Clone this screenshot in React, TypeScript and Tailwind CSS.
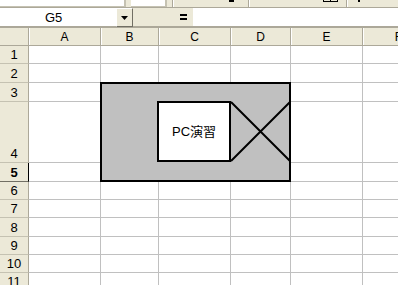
const cols = [
  { name: 'A', w: 72 },
  { name: 'B', w: 58 },
  { name: 'C', w: 72 },
  { name: 'D', w: 60 },
  { name: 'E', w: 72 },
  { name: 'F', w: 72 },
];

const rows = [
  { n: 1, h: 18 },
  { n: 2, h: 19 },
  { n: 3, h: 19 },
  { n: 4, h: 61 },
  { n: 5, h: 19, active: true },
  { n: 6, h: 18 },
  { n: 7, h: 18 },
  { n: 8, h: 19 },
  { n: 9, h: 18 },
  { n: 10, h: 18 },
  { n: 11, h: 18 },
];

const font = { fontFamily: '"Liberation Sans", "Noto Sans CJK JP", sans-serif' };

export default function App() {
  return (
    <div className="w-[398px] h-[285px] overflow-hidden bg-white text-black" style={font}>
      {/* toolbar remnant */}
      <div className="h-[8px] flex bg-[#ece9d8] border-b border-[#aca899] relative">
        <div className="w-[126px] shrink-0 h-[7px] bg-white border-r-2 border-b border-[#c5c2b2]" />
        <div className="ml-[5px] w-[36px] shrink-0 h-[7px] bg-white border-r-2 border-b border-[#c5c2b2]" />
        <div className="ml-[5px] w-[2px] shrink-0 h-[7px] border-l border-r border-l-[#aca899] border-r-white" />
        <div className="w-[74px] shrink-0 flex justify-end pr-[14px]">
          <div className="w-[5px] h-[2px] bg-black" />
        </div>
        <div className="w-[2px] shrink-0 h-[7px] border-l border-r border-l-[#aca899] border-r-white" />
        <div className="w-[96px] shrink-0 flex justify-end pr-[8px]">
          <div className="w-[15px] h-[2px] border border-t-0 border-black flex justify-center">
            <div className="w-px h-full bg-black" />
          </div>
        </div>
        <div className="w-[2px] shrink-0 h-[7px] border-l border-r border-l-[#aca899] border-r-white" />
        <div className="ml-[10px] w-[2px] h-[2px] bg-black" />
      </div>

      {/* name box / formula row */}
      <div className="h-[20px] flex border-b-2 border-[#aca899] bg-[#ece9d8]">
        <div className="w-[116px] shrink-0 bg-white pl-[45px] text-[13px] leading-[19px]">
          G5
        </div>
        <div className="w-[17px] shrink-0 h-[19px] bg-[#ece9d8] border-t border-l border-white border-r border-b border-r-[#716f64] border-b-[#716f64] flex items-center justify-center">
          <svg width="7" height="4" viewBox="0 0 7 4">
            <path d="M0 0H7L3.5 4Z" fill="#000" />
          </svg>
        </div>
        <div className="w-[60px] shrink-0 flex items-center justify-end pr-[6px]">
          <div className="flex flex-col gap-[2px]">
            <div className="w-[7px] h-[2px] bg-black" />
            <div className="w-[7px] h-[2px] bg-black" />
          </div>
        </div>
        <div className="flex-1 bg-white" />
      </div>

      {/* sheet */}
      <div className="relative">
        <div className="flex h-[18px] bg-[#ece9d8] border-b border-[#aca899]">
          <div className="w-[29px] shrink-0 border-r border-[#aca899]" />
          {cols.map((c) => (
            <div
              key={c.name}
              className="shrink-0 border-r border-[#aca899] shadow-[inset_1px_0_0_#fff] flex items-center justify-center text-[12px] leading-none"
              style={{ width: c.w }}
            >
              {c.name}
            </div>
          ))}
        </div>

        {rows.map((r) => (
          <div key={r.n} className="flex" style={{ height: r.h }}>
            <div
              className={
                r.active
                  ? 'w-[29px] shrink-0 bg-[#ece9d8] border-r border-b border-r-black border-b-[#716f64] flex items-end justify-center pb-[2px] text-[13px] leading-none font-bold'
                  : 'w-[29px] shrink-0 bg-[#ece9d8] border-r border-b border-r-[#aca899] border-b-[#c5c2b2] flex items-end justify-center pb-[2px] text-[13px] leading-none'
              }
            >
              {r.n}
            </div>
            {cols.map((c) => (
              <div
                key={c.name}
                className="shrink-0 border-r border-b border-[#c0c0c0]"
                style={{ width: c.w }}
              />
            ))}
          </div>
        ))}

        {/* drawing object */}
        <div className="absolute left-[100px] top-[54px] w-[191px] h-[100px] bg-[#c0c0c0] border-2 border-black">
          <div className="absolute left-[55px] top-[17px] w-[74px] h-[61px] bg-white border-2 border-black flex items-center justify-center text-[13px] leading-none">
            PC演習
          </div>
          <svg className="absolute left-[128px] top-[17px]" width="61" height="61" viewBox="0 0 61 61">
            <path d="M1 1L60 60M1 60L60 1" stroke="#000" strokeWidth="2" />
          </svg>
        </div>
      </div>
    </div>
  );
}
